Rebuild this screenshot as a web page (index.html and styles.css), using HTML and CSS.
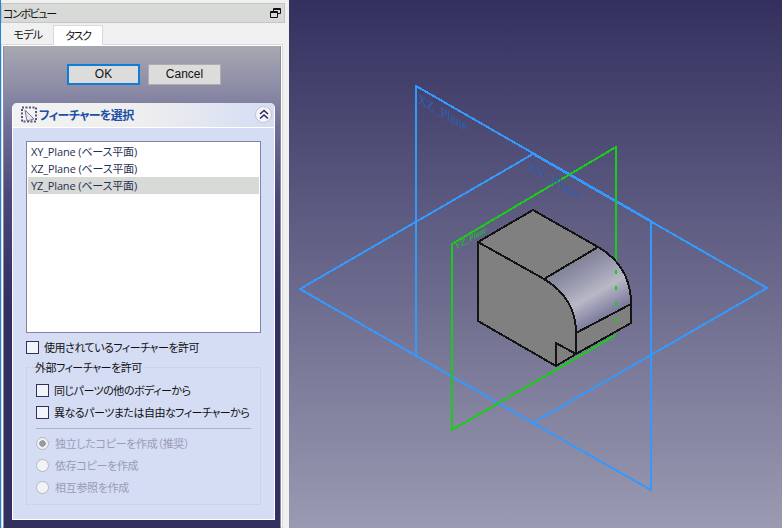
FILE: index.html
```html
<!DOCTYPE html>
<html lang="ja">
<head>
<meta charset="utf-8">
<title>コンボビュー</title>
<link rel="stylesheet" href="styles.css">
</head>
<body>
<div class="app">
  <aside class="dock">
    <div class="dock-title">
      <span>コンボビュー</span>
      <svg class="float-icon" width="11" height="10" viewBox="0 0 11 10"><path d="M3.500 3V.5h7v5H7.500M.5 3.500h7v6h-7zM.5 4.500h7M3.500 1.500h7" fill="none" stroke="#111"/></svg>
    </div>
    <div class="tabs">
      <div class="tab">モデル</div>
      <div class="tab tab-active">タスク</div>
    </div>
    <div class="tab-frame">
      <div class="task-panel">
        <div class="buttons">
          <button class="btn btn-default">OK</button>
          <button class="btn">Cancel</button>
        </div>
        <section class="taskbox">
          <header class="taskbox-head">
            <svg class="sel-icon" width="16" height="17" viewBox="0 0 16 17">
              <rect x="1" y="1.500" width="14" height="14" fill="#f4f4f8" stroke="#55557a" stroke-width="2" stroke-dasharray="2 1.500"/>
              <path d="M4 4l9 9-3 .5 1 2-1.500.5-1-2-2.500 1z" fill="#e8e8ee" stroke="#77778f"/>
            </svg>
            <h2 class="taskbox-title">フィーチャーを選択</h2>
            <span class="collapse">
              <svg width="10" height="11" viewBox="0 0 10 11"><path d="M1 5l4-3.500L9 5M1 9.500L5 6l4 3.500" fill="none" stroke="#2a2a6a" stroke-width="1.600"/></svg>
            </span>
          </header>
          <div class="taskbox-body">
            <ul class="list">
              <li class="item">XY_Plane (ベース平面)</li>
              <li class="item">XZ_Plane (ベース平面)</li>
              <li class="item item-selected">YZ_Plane (ベース平面)</li>
            </ul>
            <label class="check check-top"><span class="box"></span>使用されているフィーチャーを許可</label>
            <fieldset class="group">
              <legend class="group-title">外部フィーチャーを許可</legend>
              <label class="check check-first"><span class="box"></span>同じパーツの他のボディーから</label>
              <label class="check check-second"><span class="box"></span>異なるパーツまたは自由なフィーチャーから</label>
              <hr class="sep">
              <label class="radio"><span class="dot dot-on"></span>独立したコピーを作成（推奨）</label>
              <label class="radio"><span class="dot"></span>依存コピーを作成</label>
              <label class="radio"><span class="dot"></span>相互参照を作成</label>
            </fieldset>
          </div>
        </section>
      </div>
    </div>
  </aside>
  <main class="viewport">
    <svg class="scene" width="493" height="528" viewBox="289 0 493 528">
      <defs>
        <linearGradient id="cyl" gradientUnits="userSpaceOnUse" x1="566" y1="262" x2="604" y2="328">
          <stop offset="0" stop-color="#80808f"/>
          <stop offset=".2" stop-color="#8f8fa8"/>
          <stop offset=".55" stop-color="#b8b8c6"/>
          <stop offset=".85" stop-color="#8080a0"/>
          <stop offset="1" stop-color="#6c6c94"/>
        </linearGradient>
      </defs>
      <g class="plane-blue">
        <path d="M300 289L533 154 767 288 533 423z"/>
        <path d="M416 355V86L651 221V490L533 423"/>
      </g>
      <g class="plane-green">
        <path d="M616 270V147L452 244V430L616 335"/>
      </g>
      <text class="label" transform="matrix(.87 .5 0 1 418 103)">XZ_Plane</text>
      <text class="label" transform="matrix(.87 .5 0 1 528 170)">XY_Plane</text>
      <text class="label label-green" transform="matrix(.87 -.5 0 1 455 250)">YZ_Plane</text>
      <g class="solid">
        <path class="face" d="M533 210L478 242 544 279 598 247z"/>
        <path class="face" d="M478 242L544 279Q576 298 576 333V354L556 343V366L478 321z"/>
        <path class="cyl" d="M544 279L598 247Q631 266 631 304L576 333Q576 298 544 279z"/>
        <path class="face" d="M576 333L631 304V323L576 354z"/>
        <path class="face" d="M556 343L576 354 556 366z"/>
      </g>
      <path class="green-dash" d="M616 270V324"/>
    </svg>
  </main>
</div>
</body>
</html>
```
FILE: styles.css
```css
* { box-sizing: border-box; }
html, body { margin: 0; padding: 0; height: 528px; overflow: hidden; background: #f0f0f0; }
body { font-family: "Noto Sans CJK JP", "Noto Sans", sans-serif; font-size: 11px; color: #111; font-feature-settings: "palt"; }
.app { display: flex; height: 528px; }

.dock { width: 289px; height: 528px; flex: none; background: #f0f0f0; border-left: 1px solid #1a86dc; padding-top: 3px; }
.dock-title { height: 20px; width: 284px; background: #d8dad8; border: 1px solid #c4c6c4; display: flex; align-items: center; justify-content: space-between; padding: 0 2px 0 1px; line-height: 18px; letter-spacing: -1.400px; }
.float-icon { margin-right: 1px; }

.tabs { display: flex; height: 21px; padding: 1px 0 0 2px; align-items: flex-end; }
.tab { width: 50px; height: 19px; text-align: center; line-height: 18px; background: #f0f0f0; letter-spacing: -.7px; }
.tab-active { width: 50px; height: 20px; margin-bottom: -1px; position: relative; background: #fff; border: 1px solid #d9d9d9; border-bottom: 0; letter-spacing: -1.400px; }

.tab-frame { width: 282px; height: 484px; border: 1px solid #d9d9d9; background: #fff; padding: 1px 1px 0; }
.task-panel { height: 482px; background: linear-gradient(#a8a8b2 0, #8a8aa6 45px, #6f6f96 80px, #4a4878 150px, #33305f 260px); border-left: 1px solid #8a8aa0; border-right: 1px solid #8a8aa0; padding-top: 18px; }

.buttons { display: flex; gap: 8px; padding-left: 63px; }
.btn { width: 73px; height: 21px; padding: 0 0 2px; background: #dcdcdc; border: 1px solid #aeaeae; font-family: "Liberation Sans", sans-serif; font-size: 12px; color: #111; }
.btn-default { border: 2px solid #0f7dd4; }

.taskbox { width: 263px; margin: 18px 0 0 8px; background: #d5ddf5; border-radius: 5px 5px 0 0; border: 1px solid #fff; border-top: 0; height: 417px; }
.taskbox-head { height: 25px; display: flex; align-items: center; padding: 0 2px 1px 8px; background: linear-gradient(90deg, #f2f2f2 0, #eeeeee 50%, #d5ddf5 100%); border-radius: 5px 5px 0 0; border-bottom: 1px solid #fff; }
.sel-icon { flex: none; }
.taskbox-title { margin: 0 0 0 2px; flex: 1; font-size: 12px; font-weight: 700; color: #1c4fa5; line-height: 18px; letter-spacing: -.6px; }
.collapse { width: 17px; height: 17px; border-radius: 50%; background: #f6f6fa; border: 1px solid #c2c2c2; display: flex; align-items: center; justify-content: center; }

.taskbox-body { padding: 13px 13px 0; }
.list { list-style: none; margin: 0; padding: 1px; width: 235px; height: 192px; background: #fff; border: 1px solid #8484a6; }
.item { height: 17px; padding-left: 3px; font-family: "Open Sans", "Noto Sans CJK JP", sans-serif; font-size: 11px; line-height: 17px; color: #1f3050; letter-spacing: -.15px; }
.item-selected { background: #d8dad8; }

.check, .radio { display: flex; align-items: center; gap: 5px; height: 14px; line-height: 14px; white-space: nowrap; letter-spacing: -.5px; }
.check-top { margin-top: 7px; }
.box { width: 13px; height: 13px; flex: none; background: #f2f4fc; border: 1px solid #33305f; }
.group { margin: 6px 0 0; padding: 0 9px; width: 235px; min-width: 0; height: 145px; border: 1px dotted #c4c8d8; }
.group-title { padding: 0 2px 0 0; margin-left: -1px; line-height: 14px; letter-spacing: -.5px; }
.check-first { margin-top: 9px; }
.check-second { margin-top: 8px; }
.sep { margin: 9px 0 7px; border: 0; border-top: 1px solid #aab0c8; width: 215px; height: 1px; }
.radio { color: #9a9cb2; gap: 6px; margin-bottom: 8px; letter-spacing: -.3px; }
.dot { width: 13px; height: 13px; flex: none; border-radius: 50%; background: #f2f3f8; border: 1px solid #b8b8b8; display: flex; }
.dot-on { background: radial-gradient(circle, #9a9aa2 0 3px, #eef0f6 3.500px); }

.viewport { flex: 1; height: 528px; background: linear-gradient(#33305f 0, #9a9ab2 100%); }
.scene { display: block; }
.plane-blue path { fill: none; stroke: #3399ff; stroke-width: 2; shape-rendering: crispEdges; }
.plane-green path { fill: none; stroke: #19cc19; stroke-width: 2; shape-rendering: crispEdges; }
.label { font-family: "Liberation Serif", serif; font-size: 14px; fill: #2f60b0; }
.label-green { font-size: 9px; fill: #19cc19; }
.solid path { stroke: #141414; stroke-width: 2; stroke-linejoin: round; shape-rendering: crispEdges; }
.face { fill: #808080; }
.cyl { fill: url(#cyl); }
.green-dash { fill: none; stroke: #19cc19; stroke-width: 2; stroke-dasharray: 4 12; shape-rendering: crispEdges; }
```
